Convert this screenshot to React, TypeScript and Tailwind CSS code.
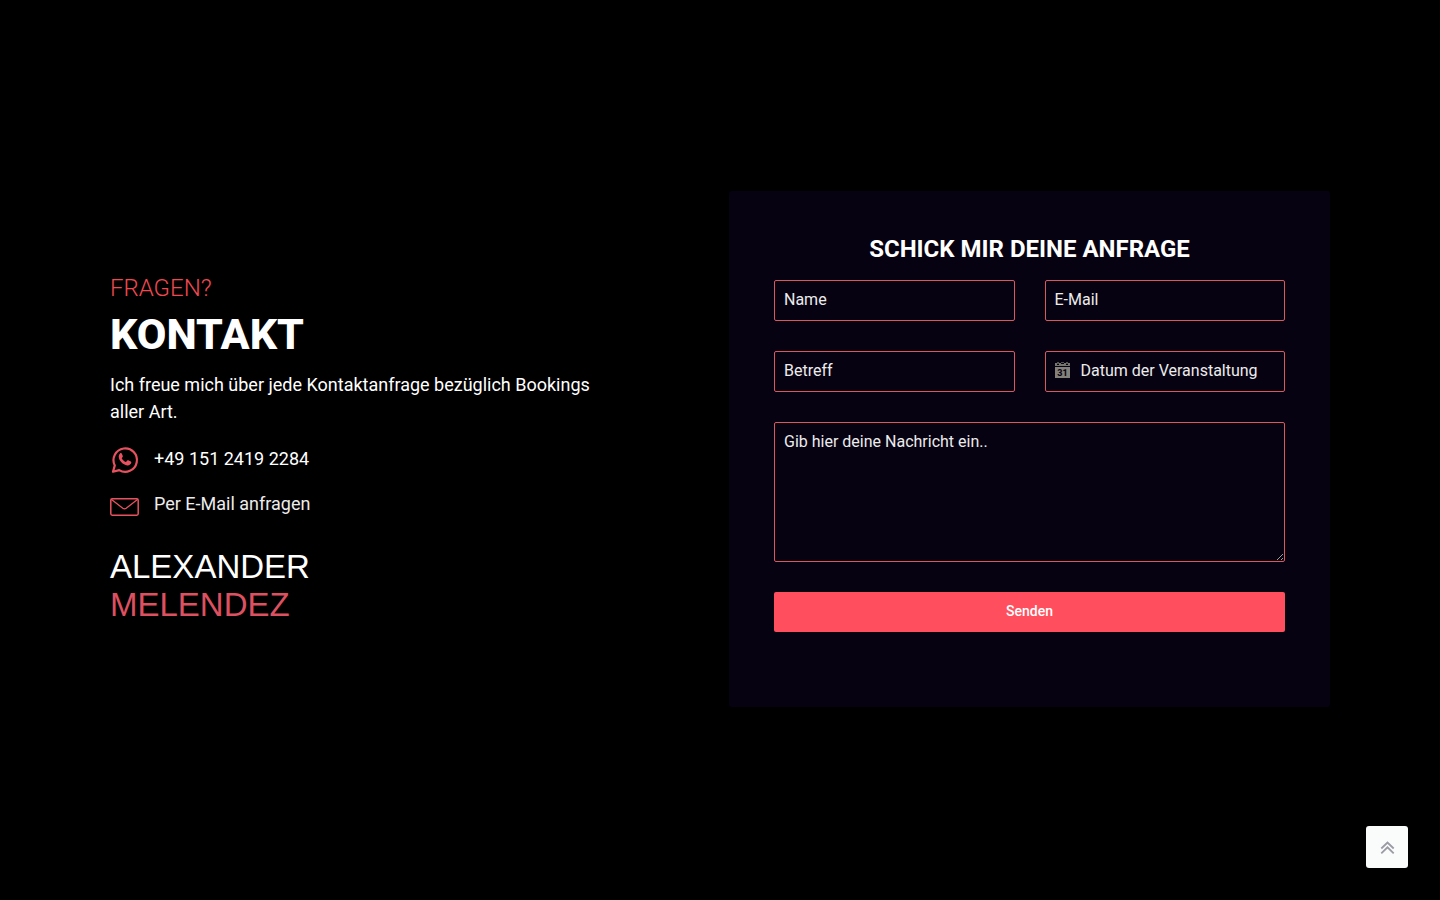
import { useState } from "react"

const WhatsAppIcon = () => (
  <svg className="w-[30px] h-[30px]" viewBox="0 0 30 30" fill="none" aria-hidden="true">
    <path
      d="M3 26.8 4.8 20.4A11.7 11.7 0 1 1 9.2 25.1Z"
      stroke="#e85260"
      strokeWidth="2.2"
      strokeLinejoin="round"
    />
    <path
      d="M10 8.4c.6-.6 1.5-.5 1.8.2l1 2.4c.1.4 0 .7-.2 1l-.9 1.2c.9 1.8 2.4 3.1 4.3 3.9l1.3-1.5c.3-.4.7-.4 1-.3l2.5 1.2c.5.3.6.6.5 1.1-.3 2-2.2 3-4 2.8-4.6-.7-8.3-4.6-8.6-8.6 0-1.3.5-2.5 1.3-3.4Z"
      fill="#e85260"
    />
  </svg>
)

const MailIcon = () => (
  <svg className="w-[30px] h-[30px]" viewBox="0 0 30 30" fill="none" aria-hidden="true">
    <rect x="0.8" y="8.8" width="27.4" height="16.4" rx="1.4" stroke="#e85260" strokeWidth="1.5" />
    <path d="M1.2 9.3 12.8 18.2Q14.5 19.4 16.2 18.2L27.8 9.3" stroke="#e85260" strokeWidth="1.3" />
  </svg>
)

const CalendarIcon = () => (
  <svg className="w-[15px] h-[18px]" viewBox="0 0 15 18" aria-hidden="true">
    <path d="M0 1h2v2h2V1h2v1h3V1h2v2h2V1h2v3H0Z" fill="#77756f" />
    <path d="M2 0h2v2H2ZM11 0h2v2h-2ZM6 0h3v1H6Z" fill="#55534f" />
    <rect y="5" width="15" height="11" fill="#83817a" />
    <text
      x="7.5"
      y="14"
      textAnchor="middle"
      fontSize="9"
      fontWeight="800"
      fontFamily="Roboto, sans-serif"
      fill="#0a0512"
    >
      31
    </text>
  </svg>
)

const DoubleChevronIcon = () => (
  <svg className="w-4 h-4" viewBox="0 0 16 16" fill="none" aria-hidden="true">
    <path
      d="M2.3 9.5 8.5 3.5 14.7 9.5M2.3 14.3 8.5 8.3 14.7 14.3"
      stroke="currentColor"
      strokeWidth="1.8"
    />
  </svg>
)

const fieldClass =
  "w-full rounded-[2px] border border-[#d95763] bg-transparent px-[9px] text-base text-white placeholder:text-[#ececec] outline-none"

export default function App() {
  const [form, setForm] = useState({
    name: "",
    email: "",
    subject: "",
    date: "",
    message: "",
  })

  return (
    <div className="min-h-screen bg-black text-white font-['Roboto',sans-serif]">
      <main className="min-h-screen flex items-center px-6 pt-12 pb-[50px] lg:px-[110px]">
        <div className="w-full max-w-[1220px] mx-auto grid items-center gap-12 lg:grid-cols-[500px_601px] lg:justify-between lg:gap-0">
          <section>
            <p className="text-2xl leading-[28px] font-light text-[#ef4850]">FRAGEN?</p>
            <h1 className="mt-2 text-[43px] leading-[48px] font-extrabold">KONTAKT</h1>
            <p className="mt-[13px] text-lg leading-[27px]">
              Ich freue mich über jede Kontaktanfrage bezüglich Bookings aller Art.
            </p>

            <div className="mt-5 flex flex-col gap-[15px] text-lg leading-[27px]">
              <a href="https://wa.me/4915124192284" className="flex items-start gap-[14px]">
                <WhatsAppIcon />
                <span>+49 151 2419 2284</span>
              </a>
              <a href="mailto:" className="flex items-start gap-[14px] text-[#ececec]">
                <MailIcon />
                <span>Per E-Mail anfragen</span>
              </a>
            </div>

            <div className="mt-7 text-[33px] leading-[38px] font-['Liberation_Sans',Arial,sans-serif]">
              <div>ALEXANDER</div>
              <div className="text-[#dd5060]">MELENDEZ</div>
            </div>
          </section>

          <section className="rounded-[3px] bg-[#070212] px-6 py-[45px] sm:px-[45px]">
            <h2 className="text-center text-2xl leading-[26px] font-bold">SCHICK MIR DEINE ANFRAGE</h2>

            <form
              className="mt-[18px] mb-[30px] grid gap-[30px] sm:grid-cols-2"
              onSubmit={(e) => e.preventDefault()}
            >
              <input
                type="text"
                aria-label="Name"
                placeholder="Name"
                className={`${fieldClass} h-[41px] pb-[2px]`}
                value={form.name}
                onChange={(e) => setForm({ ...form, name: e.target.value })}
              />

              <input
                type="email"
                aria-label="E-Mail"
                placeholder="E-Mail"
                className={`${fieldClass} h-[41px] pb-[2px]`}
                value={form.email}
                onChange={(e) => setForm({ ...form, email: e.target.value })}
              />

              <input
                type="text"
                aria-label="Betreff"
                placeholder="Betreff"
                className={`${fieldClass} h-[41px] pb-[2px]`}
                value={form.subject}
                onChange={(e) => setForm({ ...form, subject: e.target.value })}
              />

              <div className={`${fieldClass} flex h-[41px] items-center gap-[11px] pb-[2px]`}>
                <label htmlFor="date">
                  <CalendarIcon />
                </label>
                <input
                  id="date"
                  type="text"
                  aria-label="Datum der Veranstaltung"
                  placeholder="Datum der Veranstaltung"
                  className="min-w-0 flex-1 bg-transparent outline-none placeholder:text-[#ececec]"
                  value={form.date}
                  onChange={(e) => setForm({ ...form, date: e.target.value })}
                />
              </div>

              <textarea
                aria-label="Nachricht"
                placeholder="Gib hier deine Nachricht ein.."
                className={`${fieldClass} h-[140px] resize-y pt-[7px] sm:col-span-2`}
                value={form.message}
                onChange={(e) => setForm({ ...form, message: e.target.value })}
              />

              <button
                type="submit"
                className="h-10 rounded-[2px] bg-[#ff4f5e] pb-[2px] text-sm font-medium text-white sm:col-span-2"
              >
                Senden
              </button>
            </form>
          </section>
        </div>
      </main>

      <button
        type="button"
        aria-label="Nach oben"
        className="fixed right-8 bottom-8 flex size-[42px] items-center justify-center rounded-[3px] bg-[#fafbfb] text-[#9a9ba3]"
        onClick={() => window.scrollTo({ top: 0, behavior: "smooth" })}
      >
        <DoubleChevronIcon />
      </button>
    </div>
  )
}
